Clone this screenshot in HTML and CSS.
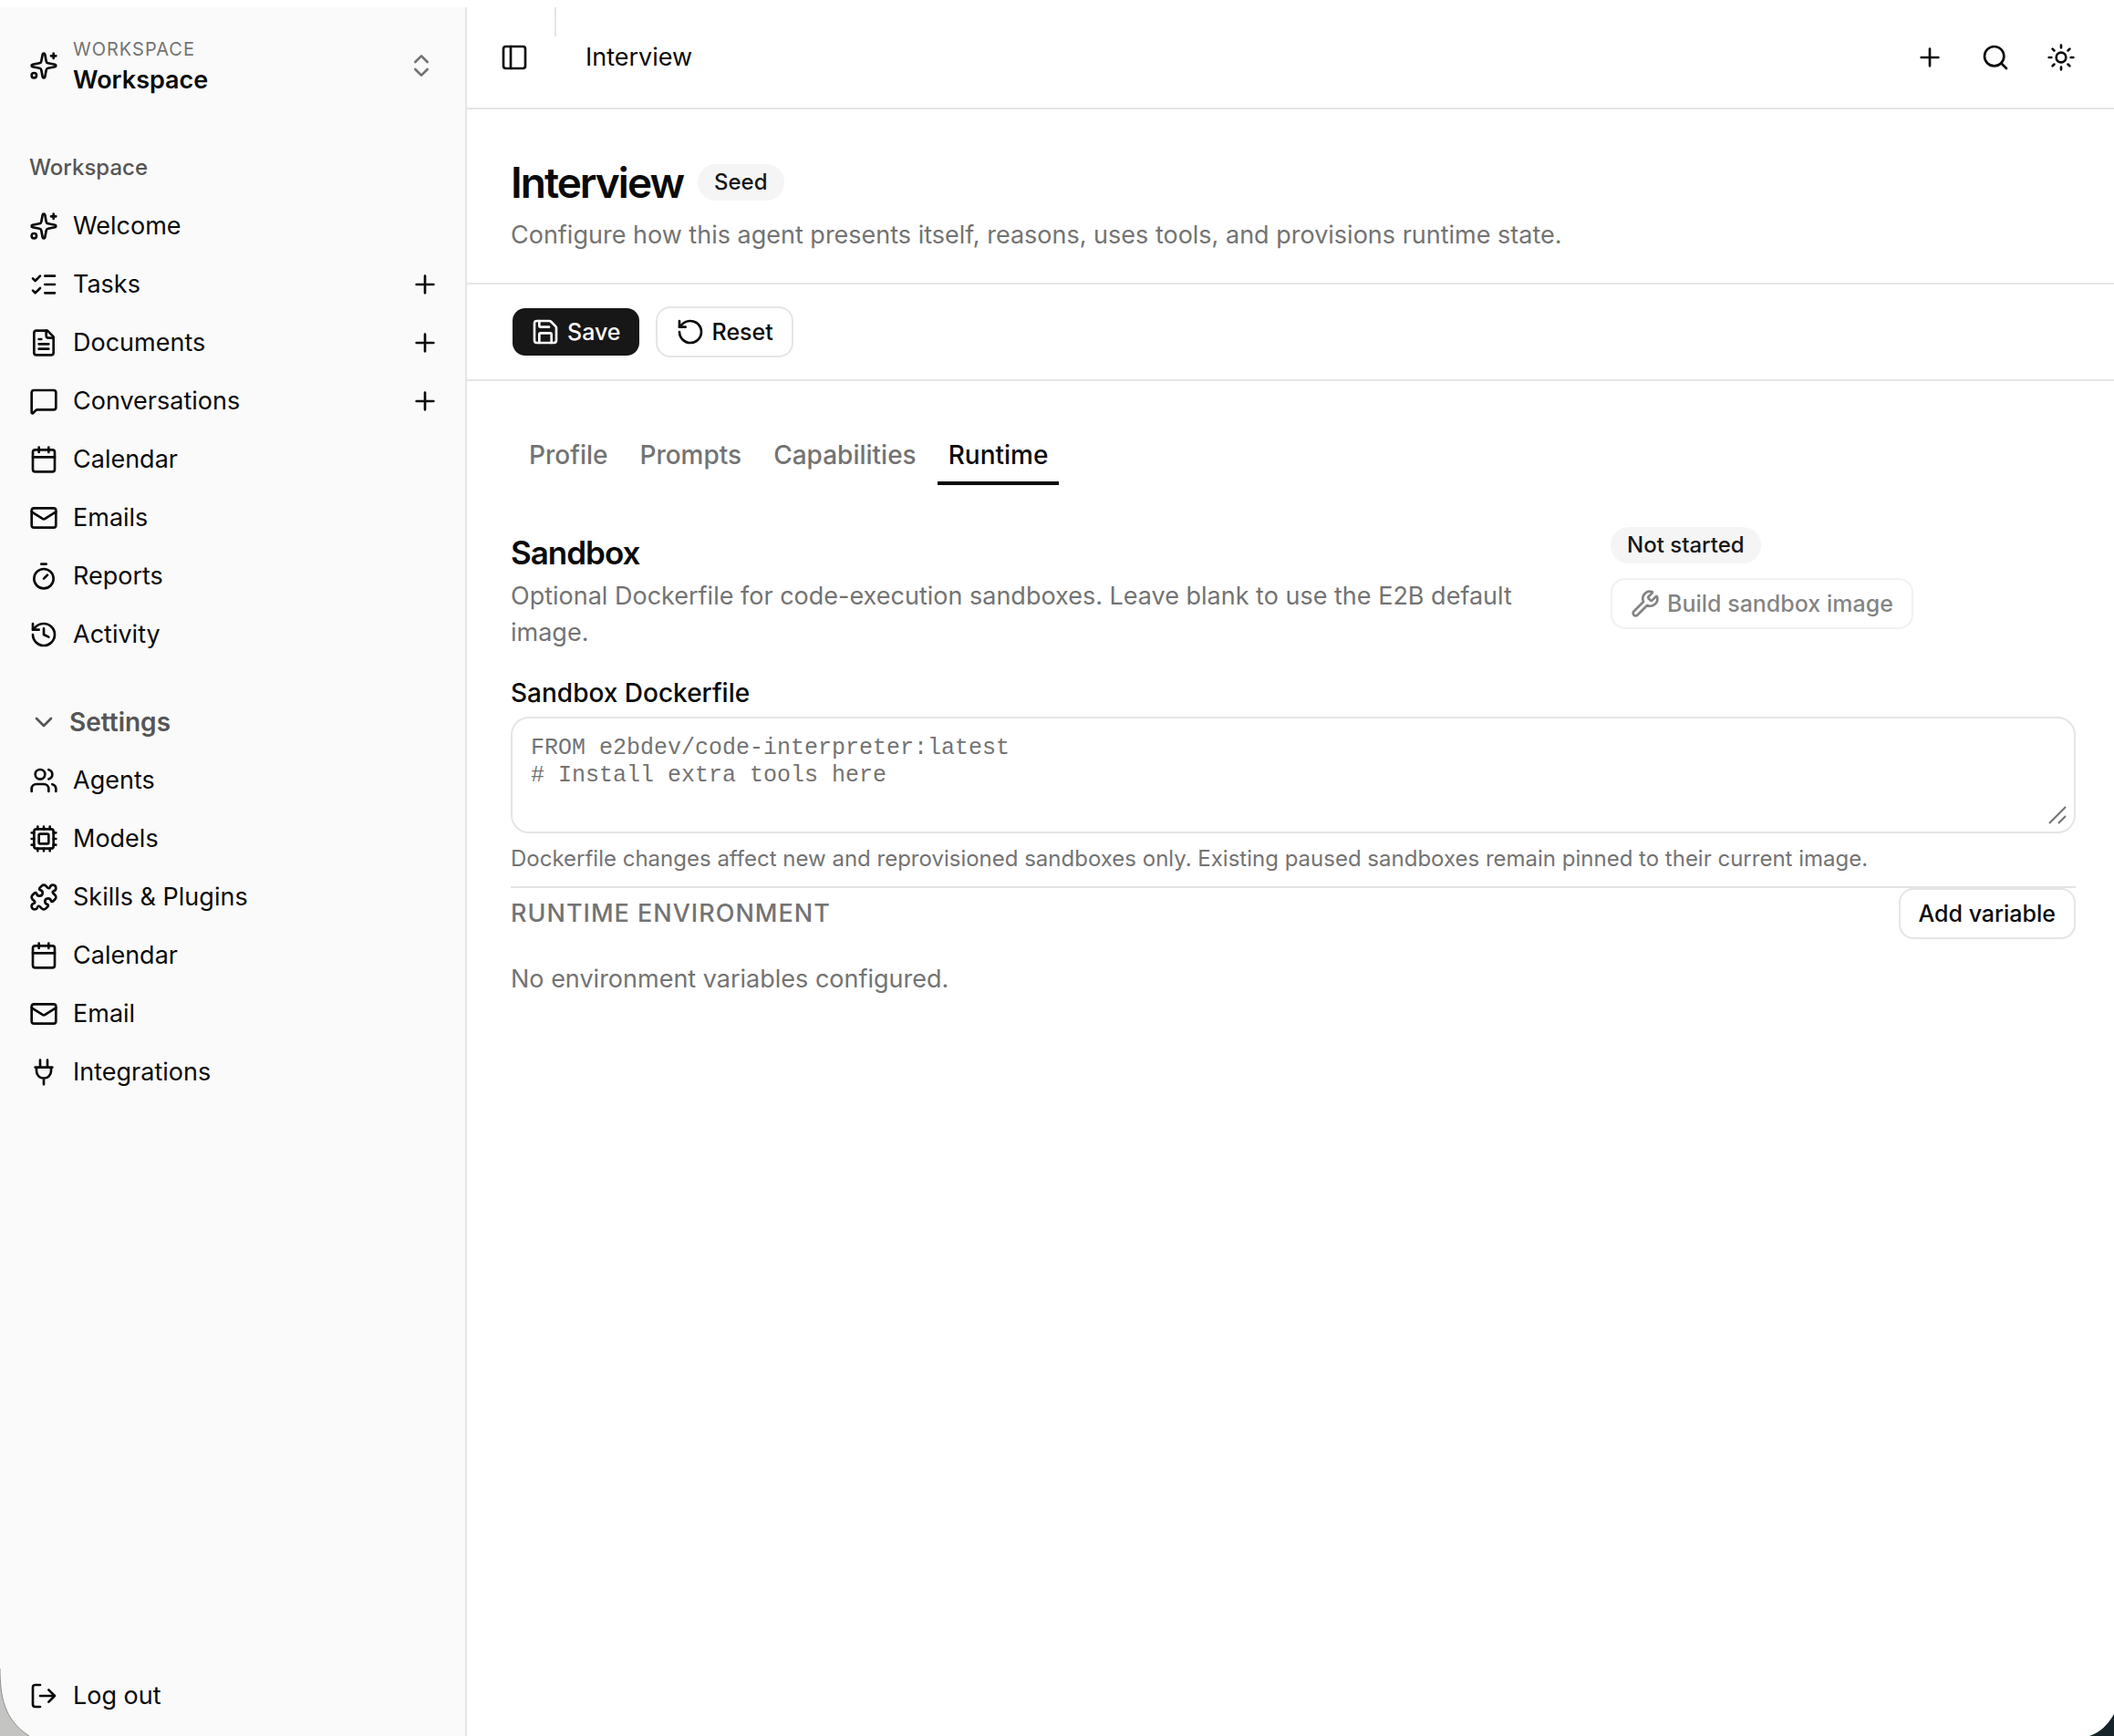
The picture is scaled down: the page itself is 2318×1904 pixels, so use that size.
FILE: index.html
```html
<!DOCTYPE html>
<html lang="en">
	<head>
		<meta charset="UTF-8">
		<title>Interview</title>
		<link rel="stylesheet" href="styles.css">
	</head>
	<body>
		<!-- icons -->
		<svg class="sprite" aria-hidden="true">
			<symbol id="sparkles" viewBox="0 0 24 24"><path d="M11.017 2.814a1 1 0 0 1 1.966 0l1.051 5.558a2 2 0 0 0 1.594 1.594l5.558 1.051a1 1 0 0 1 0 1.966l-5.558 1.051a2 2 0 0 0-1.594 1.594l-1.051 5.558a1 1 0 0 1-1.966 0l-1.051-5.558a2 2 0 0 0-1.594-1.594l-5.558-1.051a1 1 0 0 1 0-1.966l5.558-1.051a2 2 0 0 0 1.594-1.594z"/><path d="M20 2v4M22 4h-4"/><circle cx="4" cy="20" r="2"/></symbol>
			<symbol id="updown" viewBox="0 0 24 24"><path d="m7 15 5 5 5-5M7 9l5-5 5 5"/></symbol>
			<symbol id="list" viewBox="0 0 24 24"><path d="M13 5h8M13 12h8M13 19h8M3 17l2 2 4-4M3 7l2 2 4-4"/></symbol>
			<symbol id="file" viewBox="0 0 24 24"><path d="M15 2H6a2 2 0 0 0-2 2v16a2 2 0 0 0 2 2h12a2 2 0 0 0 2-2V7Z"/><path d="M14 2v4a2 2 0 0 0 2 2h4M10 9H8M16 13H8M16 17H8"/></symbol>
			<symbol id="message" viewBox="0 0 24 24"><path d="M22 17a2 2 0 0 1-2 2H6.828a2 2 0 0 0-1.414.586l-2.202 2.202A.71.71 0 0 1 2 21.286V5a2 2 0 0 1 2-2h16a2 2 0 0 1 2 2z"/></symbol>
			<symbol id="calendar" viewBox="0 0 24 24"><path d="M8 2v4M16 2v4M3 10h18"/><rect x="3" y="4" width="18" height="18" rx="2"/></symbol>
			<symbol id="mail" viewBox="0 0 24 24"><path d="m22 7-8.991 5.727a2 2 0 0 1-2.009 0L2 7"/><rect x="2" y="4" width="20" height="16" rx="2"/></symbol>
			<symbol id="timer" viewBox="0 0 24 24"><path d="M10 2h4M12 14l3-3"/><circle cx="12" cy="14" r="8"/></symbol>
			<symbol id="history" viewBox="0 0 24 24"><path d="M3 12a9 9 0 1 0 9-9 9.75 9.75 0 0 0-6.74 2.74L3 8"/><path d="M3 3v5h5M12 7v5l4 2"/></symbol>
			<symbol id="down" viewBox="0 0 24 24"><path d="m6 9 6 6 6-6"/></symbol>
			<symbol id="users" viewBox="0 0 24 24"><path d="M16 21v-2a4 4 0 0 0-4-4H6a4 4 0 0 0-4 4v2M16 3.128a4 4 0 0 1 0 7.744M22 21v-2a4 4 0 0 0-3-3.87"/><circle cx="9" cy="7" r="4"/></symbol>
			<symbol id="cpu" viewBox="0 0 24 24"><path d="M12 20v2M12 2v2M17 20v2M17 2v2M2 12h2M2 17h2M2 7h2M20 12h2M20 17h2M20 7h2M7 20v2M7 2v2"/><rect x="4" y="4" width="16" height="16" rx="2"/><rect x="8" y="8" width="8" height="8" rx="1"/></symbol>
			<symbol id="puzzle" viewBox="0 0 24 24"><path d="M15.39 4.39a1 1 0 0 0 1.68-.474 2.5 2.5 0 1 1 3.014 3.015 1 1 0 0 0-.474 1.68l1.683 1.682a2.414 2.414 0 0 1 0 3.414L19.61 15.39a1 1 0 0 1-1.68-.474 2.5 2.5 0 1 0-3.014 3.015 1 1 0 0 1 .474 1.68l-1.683 1.682a2.414 2.414 0 0 1-3.414 0L8.61 19.61a1 1 0 0 0-1.68.474 2.5 2.5 0 1 1-3.014-3.015 1 1 0 0 0 .474-1.68l-1.683-1.682a2.414 2.414 0 0 1 0-3.414L4.39 8.61a1 1 0 0 1 1.68.474 2.5 2.5 0 1 0 3.014-3.015 1 1 0 0 1-.474-1.68l1.683-1.682a2.414 2.414 0 0 1 3.414 0z"/></symbol>
			<symbol id="plug" viewBox="0 0 24 24"><path d="M12 22v-5M9 8V2M15 8V2M5 8h14M6 8v3a6 6 0 0 0 12 0V8"/></symbol>
			<symbol id="logout" viewBox="0 0 24 24"><path d="m16 17 5-5-5-5M21 12H9M9 21H5a2 2 0 0 1-2-2V5a2 2 0 0 1 2-2h4"/></symbol>
			<symbol id="panel" viewBox="0 0 24 24"><rect x="3" y="3" width="18" height="18" rx="2"/><path d="M9 3v18"/></symbol>
			<symbol id="plus" viewBox="0 0 24 24"><path d="M5 12h14M12 5v14"/></symbol>
			<symbol id="search" viewBox="0 0 24 24"><circle cx="11" cy="11" r="8"/><path d="m21 21-4.34-4.34"/></symbol>
			<symbol id="sun" viewBox="0 0 24 24"><circle cx="12" cy="12" r="4"/><path d="M12 2v2M12 20v2M4.93 4.93l1.41 1.41M17.66 17.66l1.41 1.41M2 12h2M20 12h2M6.34 17.66l-1.41 1.41M19.07 4.93l-1.41 1.41"/></symbol>
			<symbol id="disk" viewBox="0 0 24 24"><path d="M15.2 3a2 2 0 0 1 1.4.6l3.8 3.8a2 2 0 0 1 .6 1.4V19a2 2 0 0 1-2 2H5a2 2 0 0 1-2-2V5a2 2 0 0 1 2-2z"/><path d="M17 21v-7a1 1 0 0 0-1-1H8a1 1 0 0 0-1 1v7M7 3v4a1 1 0 0 0 1 1h7"/></symbol>
			<symbol id="rotate" viewBox="0 0 24 24"><path d="M3 12a9 9 0 1 0 9-9 9.75 9.75 0 0 0-6.74 2.74L3 8"/><path d="M3 3v5h5"/></symbol>
			<symbol id="wrench" viewBox="0 0 24 24"><path d="M14.7 6.3a1 1 0 0 0 0 1.4l1.6 1.6a1 1 0 0 0 1.4 0l3.106-3.105c.32-.322.863-.22.983.218a6 6 0 0 1-8.259 7.057l-7.91 7.91a1 1 0 0 1-2.999-3l7.91-7.91a6 6 0 0 1 7.057-8.259c.438.12.54.662.219.984z"/></symbol>
		</svg>

		<div class="app">
			<aside class="sidebar">
				<button class="switcher" type="button">
					<svg class="icon"><use href="#sparkles"/></svg>
					<span class="switcher-text">
						<span class="switcher-label">WORKSPACE</span>
						<span class="switcher-name">Workspace</span>
					</span>
					<svg class="icon muted"><use href="#updown"/></svg>
				</button>

				<nav class="group">
					<h2 class="group-label">Workspace</h2>
					<ul class="menu">
						<li><a href="#"><svg class="icon"><use href="#sparkles"/></svg>Welcome</a></li>
						<li><a href="#"><svg class="icon"><use href="#list"/></svg>Tasks</a><button class="add" type="button" aria-label="Add task"><svg class="icon"><use href="#plus"/></svg></button></li>
						<li><a href="#"><svg class="icon"><use href="#file"/></svg>Documents</a><button class="add" type="button" aria-label="Add document"><svg class="icon"><use href="#plus"/></svg></button></li>
						<li><a href="#"><svg class="icon"><use href="#message"/></svg>Conversations</a><button class="add" type="button" aria-label="Add conversation"><svg class="icon"><use href="#plus"/></svg></button></li>
						<li><a href="#"><svg class="icon"><use href="#calendar"/></svg>Calendar</a></li>
						<li><a href="#"><svg class="icon"><use href="#mail"/></svg>Emails</a></li>
						<li><a href="#"><svg class="icon"><use href="#timer"/></svg>Reports</a></li>
						<li><a href="#"><svg class="icon"><use href="#history"/></svg>Activity</a></li>
					</ul>
				</nav>

				<nav class="group settings">
					<button class="collapse" type="button"><svg class="icon"><use href="#down"/></svg>Settings</button>
					<ul class="menu">
						<li><a href="#"><svg class="icon"><use href="#users"/></svg>Agents</a></li>
						<li><a href="#"><svg class="icon"><use href="#cpu"/></svg>Models</a></li>
						<li><a href="#"><svg class="icon"><use href="#puzzle"/></svg>Skills &amp; Plugins</a></li>
						<li><a href="#"><svg class="icon"><use href="#calendar"/></svg>Calendar</a></li>
						<li><a href="#"><svg class="icon"><use href="#mail"/></svg>Email</a></li>
						<li><a href="#"><svg class="icon"><use href="#plug"/></svg>Integrations</a></li>
					</ul>
				</nav>

				<button class="logout" type="button"><svg class="icon"><use href="#logout"/></svg>Log out</button>
			</aside>

			<div class="page">
				<header class="topbar">
					<button class="icon-btn" type="button" aria-label="Toggle sidebar"><svg class="icon"><use href="#panel"/></svg></button>
					<span class="divider"></span>
					<span class="crumb">Interview</span>
					<div class="actions">
						<button class="icon-btn" type="button" aria-label="New"><svg class="icon"><use href="#plus"/></svg></button>
						<button class="icon-btn" type="button" aria-label="Search"><svg class="icon"><use href="#search"/></svg></button>
						<button class="icon-btn" type="button" aria-label="Theme"><svg class="icon"><use href="#sun"/></svg></button>
					</div>
				</header>

				<main>
					<section class="intro">
						<div class="title-row">
							<h1>Interview</h1>
							<span class="badge">Seed</span>
						</div>
						<p class="text">Configure how this agent presents itself, reasons, uses tools, and provisions runtime state.</p>
					</section>

					<div class="toolbar">
						<button class="btn primary" type="button"><svg class="icon"><use href="#disk"/></svg>Save</button>
						<button class="btn" type="button"><svg class="icon"><use href="#rotate"/></svg>Reset</button>
					</div>

					<div class="content">
						<div class="tabs" role="tablist">
							<button class="tab" type="button" role="tab">Profile</button>
							<button class="tab" type="button" role="tab">Prompts</button>
							<button class="tab" type="button" role="tab">Capabilities</button>
							<button class="tab active" type="button" role="tab" aria-selected="true">Runtime</button>
						</div>

						<section class="sandbox">
							<div>
								<h2>Sandbox</h2>
								<p class="text">Optional Dockerfile for code-execution sandboxes. Leave blank to use the E2B default image.</p>
							</div>
							<div class="build">
								<span class="badge">Not started</span>
								<button class="btn" type="button" disabled><svg class="icon"><use href="#wrench"/></svg>Build sandbox image</button>
							</div>
						</section>

						<div class="field">
							<label for="dockerfile">Sandbox Dockerfile</label>
							<div class="area">
								<textarea id="dockerfile" placeholder="FROM e2bdev/code-interpreter:latest&#10;# Install extra tools here"></textarea>
								<svg class="grip" viewBox="0 0 20 20"><path d="M1 19 19 1M11 19l8-8"/></svg>
							</div>
							<p class="help">Dockerfile changes affect new and reprovisioned sandboxes only. Existing paused sandboxes remain pinned to their current image.</p>
						</div>

						<hr>
						<section>
							<div class="env-head">
								<h3>RUNTIME ENVIRONMENT</h3>
								<button class="btn" type="button">Add variable</button>
							</div>
							<p class="text">No environment variables configured.</p>
						</section>
					</div>
				</main>
			</div>
		</div>

		<!-- window corners -->
		<svg class="corner left" viewBox="0 0 32 74" aria-hidden="true"><path d="M0 0C0 30 4 56 32 74H0Z" fill="#c4c4c2"/><path d="M0 0C0 30 4 56 32 74" fill="none" stroke="#8c8c8c"/></svg>
		<svg class="corner right" viewBox="0 0 27 24" aria-hidden="true"><path d="M27 0C20 12 12 20 0 24H27Z" fill="#16242a"/></svg>
	</body>
</html>
```
FILE: styles.css
```css
*{
	margin: 0;
	padding: 0;
	box-sizing: border-box;
}
body{
	font-family: Inter, "Liberation Sans", sans-serif;
	font-size: 27px;
	line-height: 40px;
	color: #0a0a0a;
	background-color: #fff;
}
button{
	font: inherit;
	color: inherit;
	background: none;
	border: 0;
}
a{
	color: inherit;
	text-decoration: none;
}
ul{
	list-style: none;
}
.sprite{
	display: none;
}
.icon{
	width: 32px;
	height: 32px;
	flex: none;
	fill: none;
	stroke: currentColor;
	stroke-width: 2;
	stroke-linecap: round;
	stroke-linejoin: round;
}
.muted{
	color: #737373;
}
.app{
	display: flex;
	min-height: 100vh;
	padding-top: 8px;
}

/* sidebar */
.sidebar{
	display: flex;
	flex-direction: column;
	flex: none;
	width: 512px;
	padding: 16px 16px 12px;
	background-color: #fafafa;
	border-right: 2px solid #e5e5e5;
}
.switcher{
	display: flex;
	align-items: center;
	gap: 16px;
	height: 96px;
	padding: 0 16px;
	text-align: left;
}
.switcher-text{
	display: flex;
	flex-direction: column;
	flex: 1;
	padding-top: 4px;
}
.switcher-label{
	font-size: 20px;
	line-height: 28px;
	letter-spacing: 1px;
	color: #737373;
}
.switcher-name{
	font-weight: 600;
}
.group{
	margin-top: 40px;
}
.group.settings{
	margin-top: 32px;
}
.group-label{
	padding: 0 16px;
	margin-bottom: 8px;
	font-size: 24px;
	font-weight: 500;
	line-height: 48px;
	color: #555;
}
.menu li{
	display: flex;
	align-items: center;
}
.menu a,
.logout,
.collapse{
	display: flex;
	align-items: center;
	flex: 1;
	gap: 16px;
	height: 64px;
	padding: 0 16px;
}
.add{
	display: flex;
	padding: 0 12px;
}
.collapse{
	gap: 12px;
	font-size: 28px;
	font-weight: 600;
	color: #555;
}
.logout{
	flex: none;
	margin-top: auto;
}

/* top bar */
.page{
	flex: 1;
	min-width: 0;
}
.topbar{
	display: flex;
	align-items: center;
	height: 112px;
	padding: 0 30px 0 24px;
	border-bottom: 2px solid #e5e5e5;
}
.icon-btn{
	display: flex;
	align-items: center;
	justify-content: center;
	width: 56px;
	height: 56px;
}
.divider{
	align-self: flex-start;
	width: 2px;
	height: 32px;
	margin: 0 32px 0 16px;
	background-color: #e5e5e5;
}
.actions{
	display: flex;
	gap: 16px;
	margin-left: auto;
}

/* heading */
.intro{
	padding: 48px 42px 32px 48px;
	border-bottom: 2px solid #e5e5e5;
}
.title-row{
	display: flex;
	align-items: center;
	gap: 16px;
	margin-bottom: 6px;
}
h1{
	font-size: 46px;
	font-weight: 600;
	line-height: 64px;
	letter-spacing: -2px;
}
.text{
	color: #737373;
}
.badge{
	height: 40px;
	padding: 0 18px;
	font-size: 24px;
	font-weight: 500;
	color: #171717;
	background-color: #f5f5f5;
	border-radius: 20px;
}
.toolbar{
	display: flex;
	gap: 16px;
	padding: 24px 42px 24px 48px;
	border-bottom: 2px solid #e5e5e5;
}
.btn{
	display: flex;
	align-items: center;
	gap: 8px;
	height: 56px;
	padding: 0 20px;
	font-size: 25px;
	font-weight: 500;
	background-color: #fff;
	border: 2px solid #e5e5e5;
	border-radius: 16px;
}
.btn.primary{
	color: #fafafa;
	background-color: #171717;
	background-clip: padding-box;
	border-color: transparent;
}
.btn:disabled{
	opacity: .5;
}

/* tabs */
.content{
	padding: 48px 42px 48px 48px;
}
.tabs{
	display: flex;
	gap: 11px;
	padding: 0 8px;
	margin-bottom: 46px;
}
.tab{
	height: 66px;
	padding: 4px 12px 0;
	font-size: 28px;
	font-weight: 500;
	color: #737373;
	border-bottom: 4px solid transparent;
}
.tab.active{
	color: #0a0a0a;
	border-color: #0a0a0a;
}

/* sandbox */
.sandbox{
	display: grid;
	grid-template-columns: 7fr 3fr;
	gap: 16px;
	margin-bottom: 28px;
}
h2{
	font-size: 35px;
	font-weight: 600;
	line-height: 56px;
	letter-spacing: -1px;
}
h2.group-label{
	letter-spacing: 0;
}
.build{
	display: flex;
	flex-direction: column;
	align-items: flex-start;
	gap: 16px;
}
.field{
	display: flex;
	flex-direction: column;
	gap: 8px;
}
label{
	font-size: 28px;
	font-weight: 500;
	line-height: 36px;
}
.area{
	position: relative;
}
textarea{
	display: block;
	width: 100%;
	height: 128px;
	padding: 18px 20px;
	font-family: "Liberation Mono", monospace;
	font-size: 25px;
	line-height: 30px;
	background-color: #fff;
	border: 2px solid #e5e5e5;
	border-radius: 20px;
	resize: none;
}
textarea::placeholder{
	color: #737373;
}
.grip{
	position: absolute;
	right: 10px;
	bottom: 10px;
	width: 20px;
	height: 20px;
	fill: none;
	stroke: #737373;
	stroke-width: 2;
}
.help{
	font-size: 24px;
	color: #737373;
}
hr{
	height: 2px;
	margin-top: 10px;
	background-color: #e5e5e5;
	border: 0;
}
.env-head{
	display: flex;
	align-items: center;
	justify-content: space-between;
	margin-bottom: 24px;
}
h3{
	font-size: 27px;
	font-weight: 500;
	letter-spacing: 1px;
	color: #737373;
}

/* rounded window corners */
.corner{
	position: fixed;
	bottom: 0;
}
.corner.left{
	left: 0;
	width: 32px;
	height: 74px;
}
.corner.right{
	right: 0;
	width: 27px;
	height: 24px;
}
```
